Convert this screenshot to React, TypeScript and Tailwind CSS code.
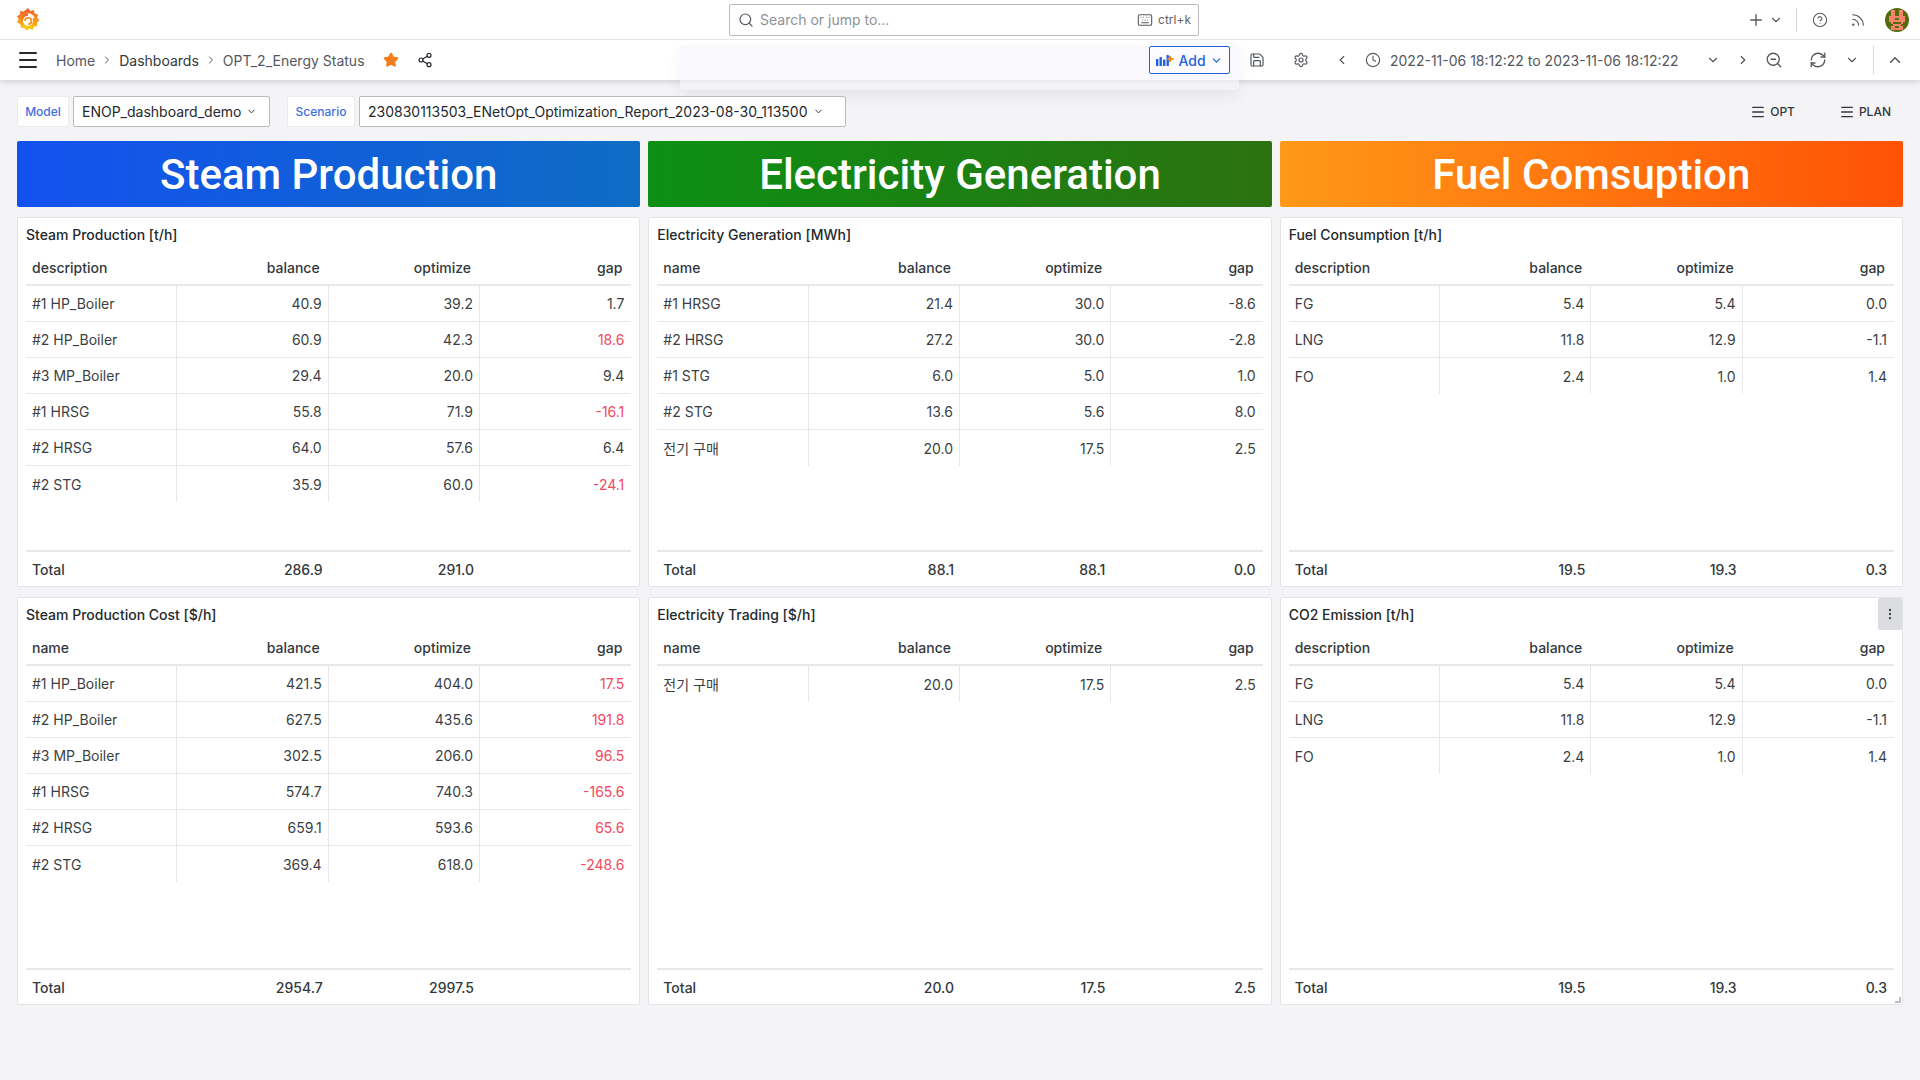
import React from "react";
import { Search, Keyboard, Plus, ChevronDown, CircleHelp, Rss, Star, Share2, Save, Settings, ChevronLeft, ChevronRight, Clock, ZoomOut, RefreshCw, ChevronUp, Menu, MoreVertical } from "lucide-react";

type Row = [string, string, string, string, boolean?];
type Panel = { title: string; first: string; rows: Row[]; total: [string, string, string] };

const top: Panel[] = [
  { title: "Steam Production [t/h]", first: "description", total: ["286.9", "291.0", ""], rows: [
    ["#1 HP_Boiler", "40.9", "39.2", "1.7"],
    ["#2 HP_Boiler", "60.9", "42.3", "18.6", true],
    ["#3 MP_Boiler", "29.4", "20.0", "9.4"],
    ["#1 HRSG", "55.8", "71.9", "-16.1", true],
    ["#2 HRSG", "64.0", "57.6", "6.4"],
    ["#2 STG", "35.9", "60.0", "-24.1", true],
  ]},
  { title: "Electricity Generation [MWh]", first: "name", total: ["88.1", "88.1", "0.0"], rows: [
    ["#1 HRSG", "21.4", "30.0", "-8.6"],
    ["#2 HRSG", "27.2", "30.0", "-2.8"],
    ["#1 STG", "6.0", "5.0", "1.0"],
    ["#2 STG", "13.6", "5.6", "8.0"],
    ["전기 구매", "20.0", "17.5", "2.5"],
  ]},
  { title: "Fuel Consumption [t/h]", first: "description", total: ["19.5", "19.3", "0.3"], rows: [
    ["FG", "5.4", "5.4", "0.0"],
    ["LNG", "11.8", "12.9", "-1.1"],
    ["FO", "2.4", "1.0", "1.4"],
  ]},
];

const bottom: Panel[] = [
  { title: "Steam Production Cost [$/h]", first: "name", total: ["2954.7", "2997.5", ""], rows: [
    ["#1 HP_Boiler", "421.5", "404.0", "17.5", true],
    ["#2 HP_Boiler", "627.5", "435.6", "191.8", true],
    ["#3 MP_Boiler", "302.5", "206.0", "96.5", true],
    ["#1 HRSG", "574.7", "740.3", "-165.6", true],
    ["#2 HRSG", "659.1", "593.6", "65.6", true],
    ["#2 STG", "369.4", "618.0", "-248.6", true],
  ]},
  { title: "Electricity Trading [$/h]", first: "name", total: ["20.0", "17.5", "2.5"], rows: [
    ["전기 구매", "20.0", "17.5", "2.5"],
  ]},
  { title: "CO2 Emission [t/h]", first: "description", total: ["19.5", "19.3", "0.3"], rows: [
    ["FG", "5.4", "5.4", "0.0"],
    ["LNG", "11.8", "12.9", "-1.1"],
    ["FO", "2.4", "1.0", "1.4"],
  ]},
];

function Logo() {
  return (
    <svg width="24" height="26" viewBox="0 0 24 26">
      <defs>
        <linearGradient id="g" x1="0.5" y1="1" x2="0.5" y2="0">
          <stop offset="0" stopColor="#fbca0a" />
          <stop offset="1" stopColor="#f05a28" />
        </linearGradient>
      </defs>
      <path d="M12 1l2.4 3 3.4-1 .9 3.4 3.4 1-1 3.3 2.4 2.6-2.6 2.2.5 3.5-3.5.6-1.4 3.3-3.2-1.3-2.9 2-2-2.9-3.5.1-.4-3.5L1 15.500l1.600-3.100L1 9.300l3-1.700.300-3.500 3.500.300z" fill="url(#g)" />
      <circle cx="12" cy="13.500" r="7.200" fill="#fff" />
      <path d="M12 7.500a6.300 6.300 0 1 0 6.300 6.300c0-1-.3-1.800-.7-2.600" fill="none" stroke="url(#g)" strokeWidth="2.400" />
      <path d="M9 14a3.200 3.200 0 1 1 3.200 3.200" fill="none" stroke="#f8941d" strokeWidth="1.800" />
    </svg>
  );
}

function Avatar() {
  return (
    <svg width="24" height="24" viewBox="0 0 12 12" shapeRendering="crispEdges" className="rounded-full">
      <rect width="12" height="12" fill="#556b0f" />
      <path d="M3 1h2v3h2V1h2v3h1v3H9v1H8v1h1v2H3V9h1V8H3V7H2V4h1z" fill="#f4846a" />
      <path d="M5 5h2v1H5zM5 9h2v1H5zM4 7h4v1H4z" fill="#556b0f" />
    </svg>
  );
}

function AddIcon() {
  return (
    <svg width="18" height="14" viewBox="0 0 18 14">
      <g fill="#1f62e0">
        <rect x="0" y="6" width="2.400" height="7" rx="0.500" />
        <rect x="3.500" y="4" width="2.400" height="9" rx="0.500" />
        <rect x="7" y="6.500" width="2.400" height="6.500" rx="0.500" />
        <rect x="10.500" y="2" width="2.400" height="11" rx="0.500" />
      </g>
      <path d="M14 3v6M11.500 6h6" stroke="#f58a1f" strokeWidth="2" />
    </svg>
  );
}

function Table({ p, kebab }: { p: Panel; kebab?: boolean }) {
  return (
    <div className="relative flex flex-col bg-white border border-[#e3e3e8] rounded-[2px] min-w-0">
      <div className="h-[32px] shrink-0 flex items-center px-[8px] text-[14px] font-medium text-[#24292e]">{p.title}</div>
      {kebab && (
        <div className="absolute right-0 top-0 w-[24px] h-[32px] bg-[#dcdde0] rounded-[2px] flex items-center justify-center text-[#3f4349]">
          <MoreVertical size={14} />
        </div>
      )}
      <div className="flex-1 flex flex-col px-[8px] min-h-0">
        <div className="grid grid-cols-4 h-[36px] shrink-0 items-center border-b-2 border-[#e8e8ec] text-[14px] font-medium text-[#33383d]">
          <div className="pl-[6px]">{p.first}</div>
          <div className="text-right pr-[9px]">balance</div>
          <div className="text-right pr-[9px]">optimize</div>
          <div className="text-right pr-[9px]">gap</div>
        </div>
        <div className="flex-1">
          {p.rows.map((r, i) => (
            <div key={i} className={`grid grid-cols-4 h-[36px] text-[14px] text-[#3b3f45] ${i < p.rows.length - 1 ? "border-b border-[#e8e8ec]" : ""}`}>
              <div className="flex items-center pl-[6px] border-r border-[#e8e8ec]">{r[0]}</div>
              <div className="flex items-center justify-end pr-[6px] border-r border-[#e8e8ec]">{r[1]}</div>
              <div className="flex items-center justify-end pr-[6px] border-r border-[#e8e8ec]">{r[2]}</div>
              <div className={`flex items-center justify-end pr-[7px] ${r[4] ? "text-[#f2495c]" : ""}`}>{r[3]}</div>
            </div>
          ))}
        </div>
        <div className="grid grid-cols-4 h-[36px] shrink-0 items-center border-t-2 border-[#e8e8ec] text-[14px] font-medium text-[#33383d]">
          <div className="pl-[6px]">Total</div>
          <div className="text-right pr-[6px]">{p.total[0]}</div>
          <div className="text-right pr-[6px]">{p.total[1]}</div>
          <div className="text-right pr-[7px]">{p.total[2]}</div>
        </div>
      </div>
      {kebab && (
        <svg className="absolute right-[1px] bottom-[1px]" width="6" height="6" viewBox="0 0 6 6">
          <path d="M5 0v5H0" fill="none" stroke="#a8aab0" strokeWidth="1.500" />
        </svg>
      )}
    </div>
  );
}

export default function App() {
  return (
    <div className="relative w-[1920px] h-[1080px] overflow-hidden bg-[#f4f3f6] text-[#24292e] font-['Inter','Noto_Sans_CJK_KR',sans-serif]">
      <header className="h-[40px] bg-white border-b border-[#e4e4e8] flex items-center relative z-10">
        <div className="w-[729px] shrink-0 pl-[16px] flex items-center"><Logo /></div>
        <div className="w-[470px] h-[32px] shrink-0 bg-white border border-[#b9babf] rounded-[2px] flex items-center pl-[8px] pr-[7px] text-[14px] text-[#8e9196]">
          <Search size={16} className="text-[#54585e] mr-[6px]" strokeWidth={1.800} />
          <span className="flex-1">Search or jump to...</span>
          <Keyboard size={16} className="text-[#54585e] mr-[5px]" strokeWidth={1.600} />
          <span className="text-[12px] text-[#5f6368]">ctrl+k</span>
        </div>
        <div className="flex-1 flex items-center justify-end text-[#54585e] pr-[11px]">
          <Plus size={18} strokeWidth={1.800} />
          <ChevronDown size={14} className="ml-[4px]" />
          <div className="w-px h-[24px] bg-[#d5d6da] ml-[13px] mr-[15px]" />
          <CircleHelp size={16} strokeWidth={1.600} />
          <Rss size={16} strokeWidth={1.600} className="ml-[22px] mr-[19px]" />
          <Avatar />
        </div>
      </header>

      <nav className="relative h-[40px] bg-white flex items-center shadow-[0_1px_6px_rgba(40,40,50,0.22)] text-[14px] text-[#54585e]">
        <Menu size={24} strokeWidth={2} className="ml-[16px] text-[#24292e]" />
        <span className="ml-[16px]">Home</span>
        <ChevronRight size={12} className="mx-[6px]" />
        <span className="text-[#33383d]">Dashboards</span>
        <ChevronRight size={12} className="mx-[6px]" />
        <span>OPT_2_Energy Status</span>
        <Star size={16} className="ml-[18px] text-[#f57c17]" fill="#f57c17" />
        <Share2 size={16} strokeWidth={1.800} className="ml-[18px] text-[#24292e]" />
        <div className="flex-1" />
        <div className="relative z-10 w-[81px] h-[28px] bg-[#fdfdff] border border-[#1f62e0] rounded-[2px] flex items-center justify-center text-[#1f62e0] font-medium gap-[4px]">
          <AddIcon />
          <span>Add</span>
          <ChevronDown size={13} strokeWidth={2.200} />
        </div>
        <Save size={16} strokeWidth={1.800} className="ml-[19px]" />
        <Settings size={16} strokeWidth={1.800} className="ml-[28px]" />
        <ChevronLeft size={14} className="ml-[26px]" />
        <Clock size={16} strokeWidth={1.700} className="ml-[16px]" />
        <span className="ml-[9px] w-[304px] whitespace-nowrap">2022-11-06 18:12:22 to 2023-11-06 18:12:22</span>
        <ChevronDown size={14} className="ml-[12px]" />
        <ChevronRight size={14} className="ml-[16px]" />
        <ZoomOut size={18} strokeWidth={1.700} className="ml-[15px]" />
        <RefreshCw size={18} strokeWidth={1.700} className="ml-[26px]" />
        <ChevronDown size={14} className="ml-[18px]" />
        <div className="w-px h-[28px] bg-[#d5d6da] ml-[14px]" />
        <ChevronUp size={18} strokeWidth={2} className="ml-[12px] mr-[16px]" />
      </nav>

      <div className="absolute left-[680px] top-[46px] w-[559px] h-[44px] rounded-[4px] bg-[#f5f3fa]/60 shadow-[0_6px_14px_rgba(60,60,80,0.08)]" />

      <main className="relative px-[17px]">
        <div className="flex items-center h-[31px] mt-[16px] text-[12px]">
          <div className="h-full w-[52px] bg-white border border-[#ebebef] rounded-[2px] flex items-center justify-center font-medium text-[#3d6fe0]">Model</div>
          <div className="ml-[4px] h-full w-[197px] bg-white border border-[#b9babf] rounded-[2px] flex items-center pl-[8px] text-[14px] text-[#24292e] whitespace-nowrap">
            ENOP_dashboard_demo<ChevronDown size={11} className="ml-[5px]" />
          </div>
          <div className="ml-[17px] h-full w-[68px] bg-white border border-[#ebebef] rounded-[2px] flex items-center justify-center font-medium text-[#3d6fe0]">Scenario</div>
          <div className="ml-[4px] h-full w-[487px] bg-white border border-[#b9babf] rounded-[2px] flex items-center pl-[8px] text-[14px] text-[#24292e] whitespace-nowrap">
            230830113503_ENetOpt_Optimization_Report_2023-08-30_113500<ChevronDown size={11} className="ml-[5px]" />
          </div>
          <div className="flex-1" />
          <div className="flex items-center gap-[4px] font-medium text-[#33383d]"><Menu size={16} />OPT</div>
          <div className="flex items-center gap-[4px] ml-[44px] mr-[12px] font-medium text-[#33383d]"><Menu size={16} />PLAN</div>
        </div>

        <div className="grid grid-cols-3 gap-x-[8px] mt-[14px]">
          {[
            ["Steam Production", "bg-[linear-gradient(90deg,#1351ef,#0f6cc4)]"],
            ["Electricity Generation", "bg-[linear-gradient(90deg,#0c8f14,#2c7210)]"],
            ["Fuel Comsuption", "bg-[linear-gradient(90deg,#ff9818,#ff5205)]"],
          ].map(([t, c]) => (
            <div key={t} className={`h-[66px] rounded-[2px] flex items-center justify-center text-white text-[42px] font-medium font-['Roboto',sans-serif] ${c}`}>{t}</div>
          ))}
        </div>

        <div className="grid grid-cols-3 gap-x-[8px] gap-y-[10px] mt-[10px] grid-rows-[370px_408px]">
          {top.map((p) => <Table key={p.title} p={p} />)}
          {bottom.map((p, i) => <Table key={p.title} p={p} kebab={i === 2} />)}
        </div>
      </main>
    </div>
  );
}
